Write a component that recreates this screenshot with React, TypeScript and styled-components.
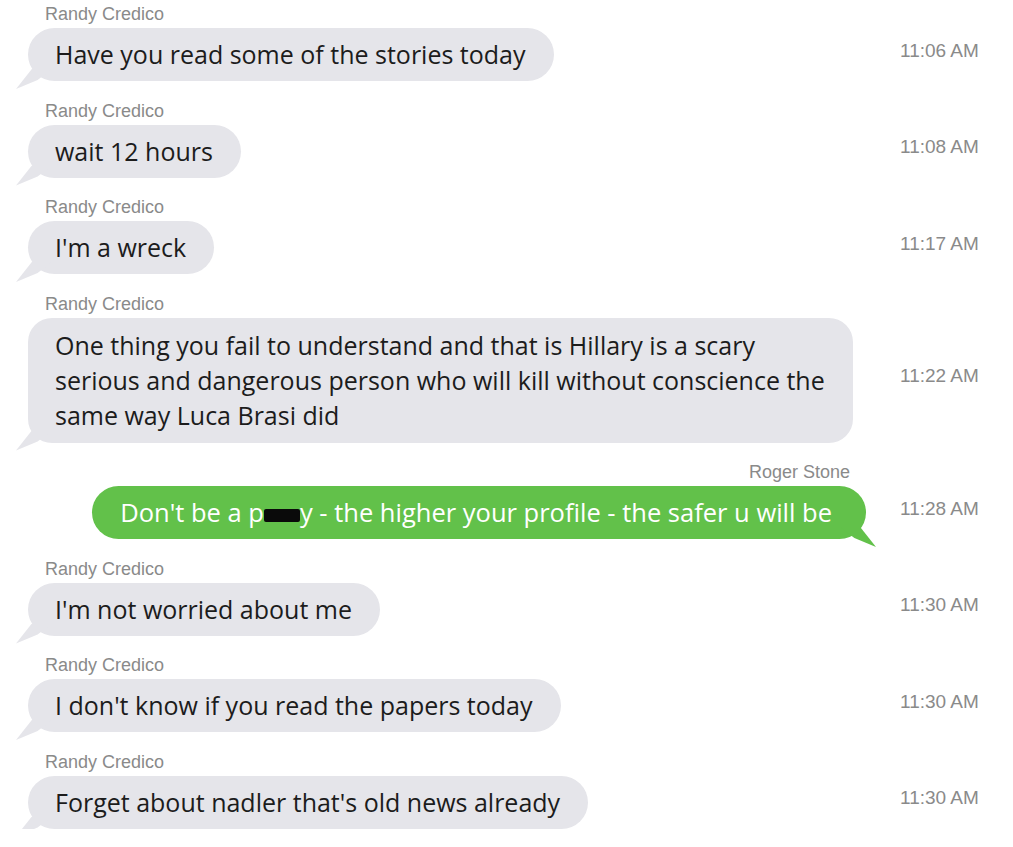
import React from 'react'
import styled, {createGlobalStyle} from 'styled-components'

const GlobalStyle = createGlobalStyle`
    html, body {
        margin: 0;
        padding: 0;
        background: #ffffff;
    }
    body {
        font-family: "Open Sans", "Noto Sans", sans-serif;
    }
`

const Thread = styled.div`
    width: 1013px;
    padding: 4px 0 0 28px;
    box-sizing: border-box;
    display: flex;
    flex-direction: column;
    gap: 19.5px;
`

const Row = styled.div`
    display: grid;
    grid-template-columns: 872px 1fr;
    grid-template-rows: 20px auto;
    row-gap: 4px;
`

const Name = styled.div<{ $out?: boolean }>`
    grid-column: 1;
    grid-row: 1;
    font-family: "Liberation Sans", Arial, sans-serif;
    font-size: 18px;
    line-height: 20px;
    color: #8a8a8a;
    padding-left: ${p => (p.$out ? '0' : '17px')};
    padding-right: ${p => (p.$out ? '50px' : '0')};
    text-align: ${p => (p.$out ? 'right' : 'left')};
`

const BubbleCell = styled.div<{ $out?: boolean }>`
    grid-column: 1;
    grid-row: 2;
    display: flex;
    justify-content: ${p => (p.$out ? 'flex-end' : 'flex-start')};
    padding-right: ${p => (p.$out ? '34px' : '0')};
`

const Bubble = styled.div<{ $out?: boolean; $multi?: boolean }>`
    position: relative;
    box-sizing: border-box;
    min-height: 53px;
    padding: ${p => (p.$multi ? '10px 28px 10px 27px' : p.$out ? '10px 34px 10px 28px' : '10px 28px 10px 27px')};
    border-radius: ${p => (p.$multi ? '24px' : '27px')};
    background: ${p => (p.$out ? '#62c14a' : '#e5e5ea')};
    color: ${p => (p.$out ? '#ffffff' : '#1c1c1c')};
    font-size: ${p => (p.$out ? '25.5px' : '25px')};
    line-height: ${p => (p.$multi ? '35px' : '33px')};
    white-space: ${p => (p.$out ? 'nowrap' : 'normal')};
    max-width: 830px;

    &::before {
        content: '';
        position: absolute;
        bottom: -8px;
        width: 36px;
        height: 20px;
        background: inherit;
        ${p => p.$out
            ? 'right: -10px; clip-path: polygon(0 0, 56% 0, 100% 100%, 40% 55%);'
            : 'left: -12px; clip-path: polygon(100% 0, 44% 0, 0 100%, 60% 55%);'}
    }
`

const Redacted = styled.span`
    display: inline-block;
    width: 36px;
    height: 13px;
    background: #0a0a0a;
    border-radius: 2px;
    vertical-align: 0;
`

const Time = styled.div`
    grid-column: 2;
    grid-row: 2;
    align-self: center;
    margin-bottom: 8px;
    font-family: "Liberation Sans", Arial, sans-serif;
    font-size: 19px;
    color: #8a8a8a;
    white-space: nowrap;
`

type Msg = {
    from: string
    time: string
    out?: boolean
    multi?: boolean
    text: React.ReactNode
}

const messages: Msg[] = [
    {from: 'Randy Credico', time: '11:06 AM', text: 'Have you read some of the stories today'},
    {from: 'Randy Credico', time: '11:08 AM', text: 'wait 12 hours'},
    {from: 'Randy Credico', time: '11:17 AM', text: "I'm a wreck"},
    {
        from: 'Randy Credico',
        time: '11:22 AM',
        multi: true,
        text: (
            <>
                One thing you fail to understand and that is Hillary is a scary<br/>
                serious and dangerous person who will kill without conscience the<br/>
                same way Luca Brasi did
            </>
        ),
    },
    {
        from: 'Roger Stone',
        time: '11:28 AM',
        out: true,
        text: (
            <>
                Don't be a p<Redacted/>y - the higher your profile - the safer u will be
            </>
        ),
    },
    {from: 'Randy Credico', time: '11:30 AM', text: "I'm not worried about me"},
    {from: 'Randy Credico', time: '11:30 AM', text: "I don't know if you read the papers today"},
    {from: 'Randy Credico', time: '11:30 AM', text: "Forget about nadler that's old news already"},
]

export default function App() {
    return (
        <>
            <GlobalStyle/>
            <Thread>
                {messages.map((m, i) => (
                    <Row key={i}>
                        <Name $out={m.out}>{m.from}</Name>
                        <BubbleCell $out={m.out}>
                            <Bubble $out={m.out} $multi={m.multi}>{m.text}</Bubble>
                        </BubbleCell>
                        <Time>{m.time}</Time>
                    </Row>
                ))}
            </Thread>
        </>
    )
}
